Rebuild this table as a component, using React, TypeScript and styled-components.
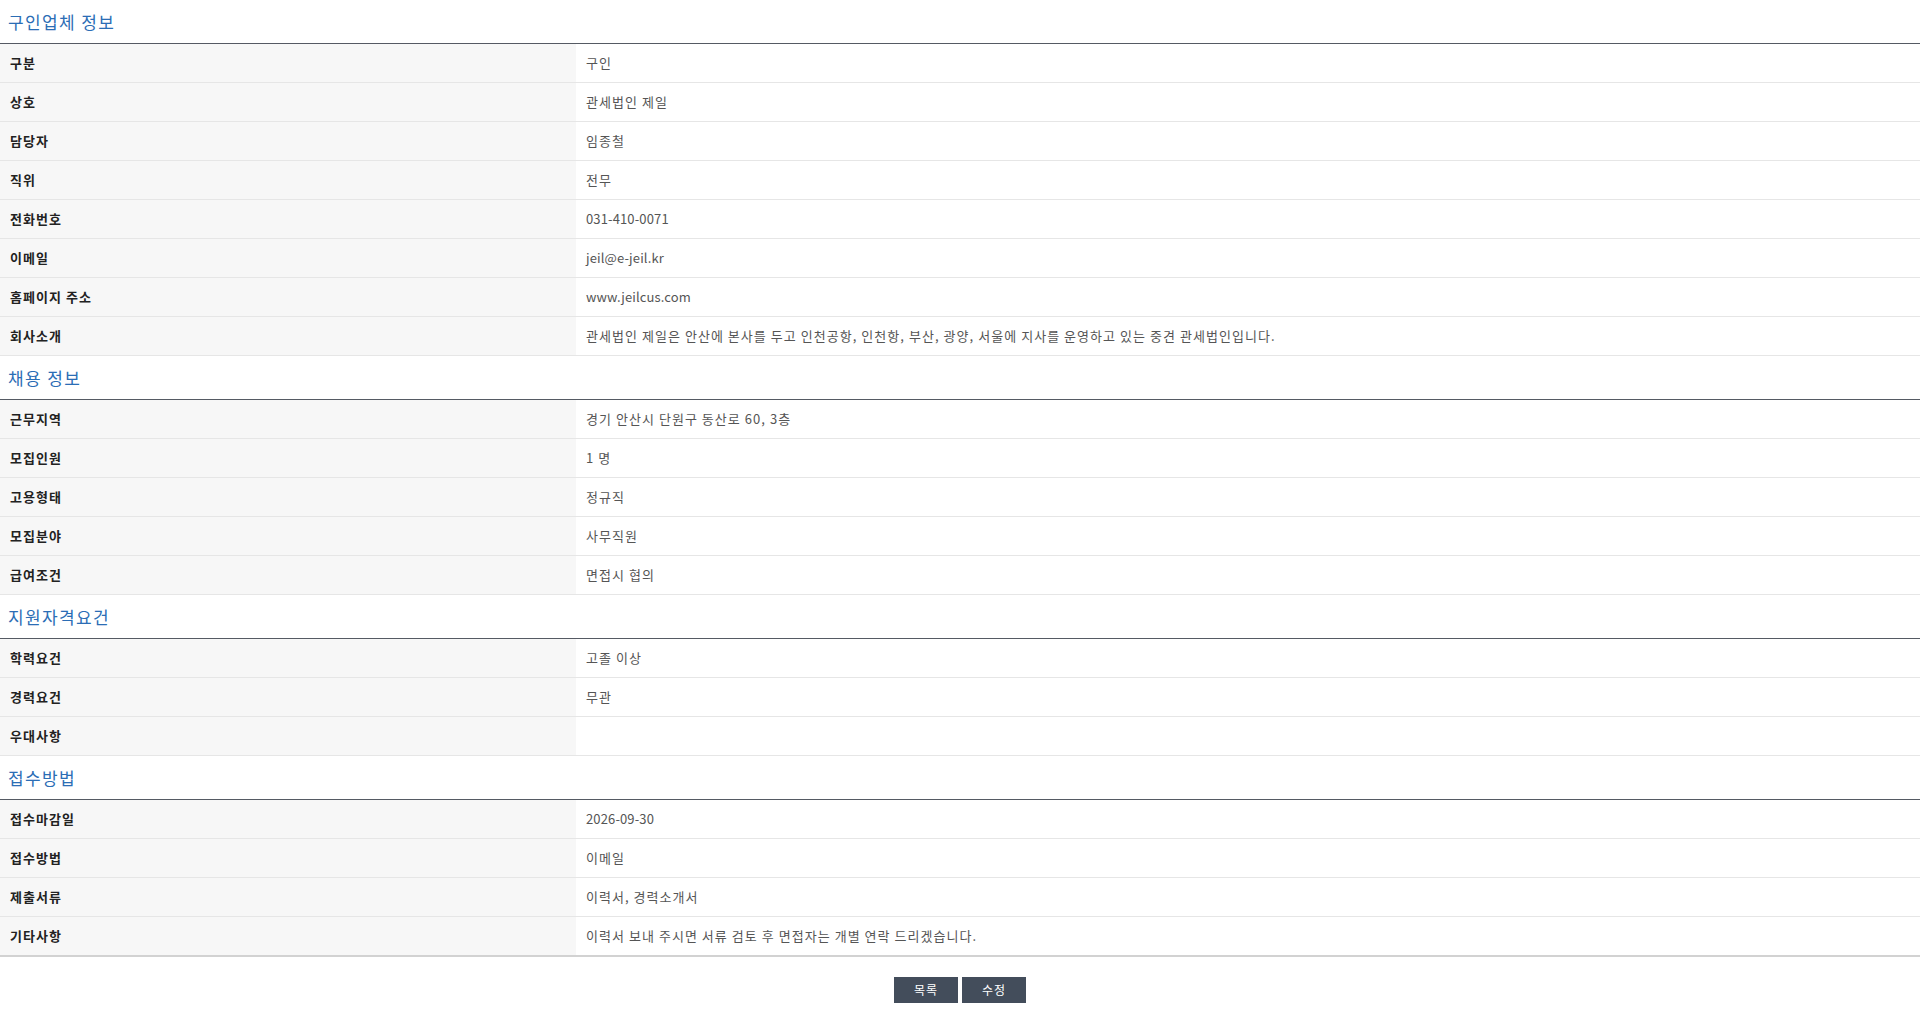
import React from "react";
import styled, { createGlobalStyle } from "styled-components";

const GlobalStyle = createGlobalStyle`
  html, body { margin: 0; padding: 0; background: #fff; }
  body { font-family: "Noto Sans CJK KR", "Noto Sans", sans-serif; }
  * { box-sizing: border-box; }
`;

const Page = styled.div`
  width: 100%;
  display: flex;
  flex-direction: column;
`;

const SectionTitle = styled.h3`
  margin: 0;
  height: 43px;
  display: flex;
  align-items: center;
  padding: 0 0 1px 8px;
  font-size: 17px;
  font-weight: 400;
  color: #2b6db5;
  letter-spacing: 0.08em;
`;

const Table = styled.div<{ $last?: boolean }>`
  display: flex;
  flex-direction: column;
  border-top: 1px solid #555a63;
  ${(p) => (p.$last ? "& > div:last-child { border-bottom: 2px solid #d2d2d2; height: 40px; }" : "")}
`;

const Row = styled.div`
  display: grid;
  grid-template-columns: 576px 1fr;
  height: 39px;
  border-bottom: 1px solid #e6e6e6;
`;

const Label = styled.div`
  background: #f7f7f7;
  display: flex;
  align-items: center;
  padding: 0 0 2px 10px;
  font-size: 13px;
  font-weight: 700;
  color: #222;
  letter-spacing: 0.08em;
`;

const Value = styled.div<{ $latin?: boolean }>`
  display: flex;
  align-items: center;
  padding: 0 0 2px 10px;
  font-size: 13px;
  color: #555;
  letter-spacing: ${(p) => (p.$latin ? "0.01em" : "0.08em")};
`;

const ButtonBar = styled.div`
  display: flex;
  justify-content: center;
  gap: 4px;
  padding-top: 20px;
`;

const Button = styled.button`
  width: 64px;
  height: 26px;
  border: none;
  background: #434d5b;
  color: #fff;
  font-family: "Noto Sans CJK KR", "Noto Sans", sans-serif;
  font-size: 12px;
  letter-spacing: 0.08em;
  padding: 0 0 1px;
  cursor: pointer;
`;

type Section = { title: string; rows: [string, string][] };

const sections: Section[] = [
  {
    title: "구인업체 정보",
    rows: [
      ["구분", "구인"],
      ["상호", "관세법인 제일"],
      ["담당자", "임종철"],
      ["직위", "전무"],
      ["전화번호", "031-410-0071"],
      ["이메일", "jeil@e-jeil.kr"],
      ["홈페이지 주소", "www.jeilcus.com"],
      [
        "회사소개",
        "관세법인 제일은 안산에 본사를 두고 인천공항, 인천항, 부산, 광양, 서울에 지사를 운영하고 있는 중견 관세법인입니다.",
      ],
    ],
  },
  {
    title: "채용 정보",
    rows: [
      ["근무지역", "경기 안산시 단원구 동산로 60, 3층"],
      ["모집인원", "1 명"],
      ["고용형태", "정규직"],
      ["모집분야", "사무직원"],
      ["급여조건", "면접시 협의"],
    ],
  },
  {
    title: "지원자격요건",
    rows: [
      ["학력요건", "고졸 이상"],
      ["경력요건", "무관"],
      ["우대사항", ""],
    ],
  },
  {
    title: "접수방법",
    rows: [
      ["접수마감일", "2026-09-30"],
      ["접수방법", "이메일"],
      ["제출서류", "이력서, 경력소개서"],
      ["기타사항", "이력서 보내 주시면 서류 검토 후 면접자는 개별 연락 드리겠습니다."],
    ],
  },
];

const isLatin = (s: string) => s.length > 0 && /^[\x00-\x7F]*$/.test(s);

export default function App() {
  return (
    <>
      <GlobalStyle />
      <Page>
        {sections.map((s, i) => (
          <section key={s.title}>
            <SectionTitle>{s.title}</SectionTitle>
            <Table $last={i === sections.length - 1}>
              {s.rows.map(([k, v]) => (
                <Row key={k}>
                  <Label>{k}</Label>
                  <Value $latin={isLatin(v)}>{v}</Value>
                </Row>
              ))}
            </Table>
          </section>
        ))}
        <ButtonBar>
          <Button>목록</Button>
          <Button>수정</Button>
        </ButtonBar>
      </Page>
    </>
  );
}
